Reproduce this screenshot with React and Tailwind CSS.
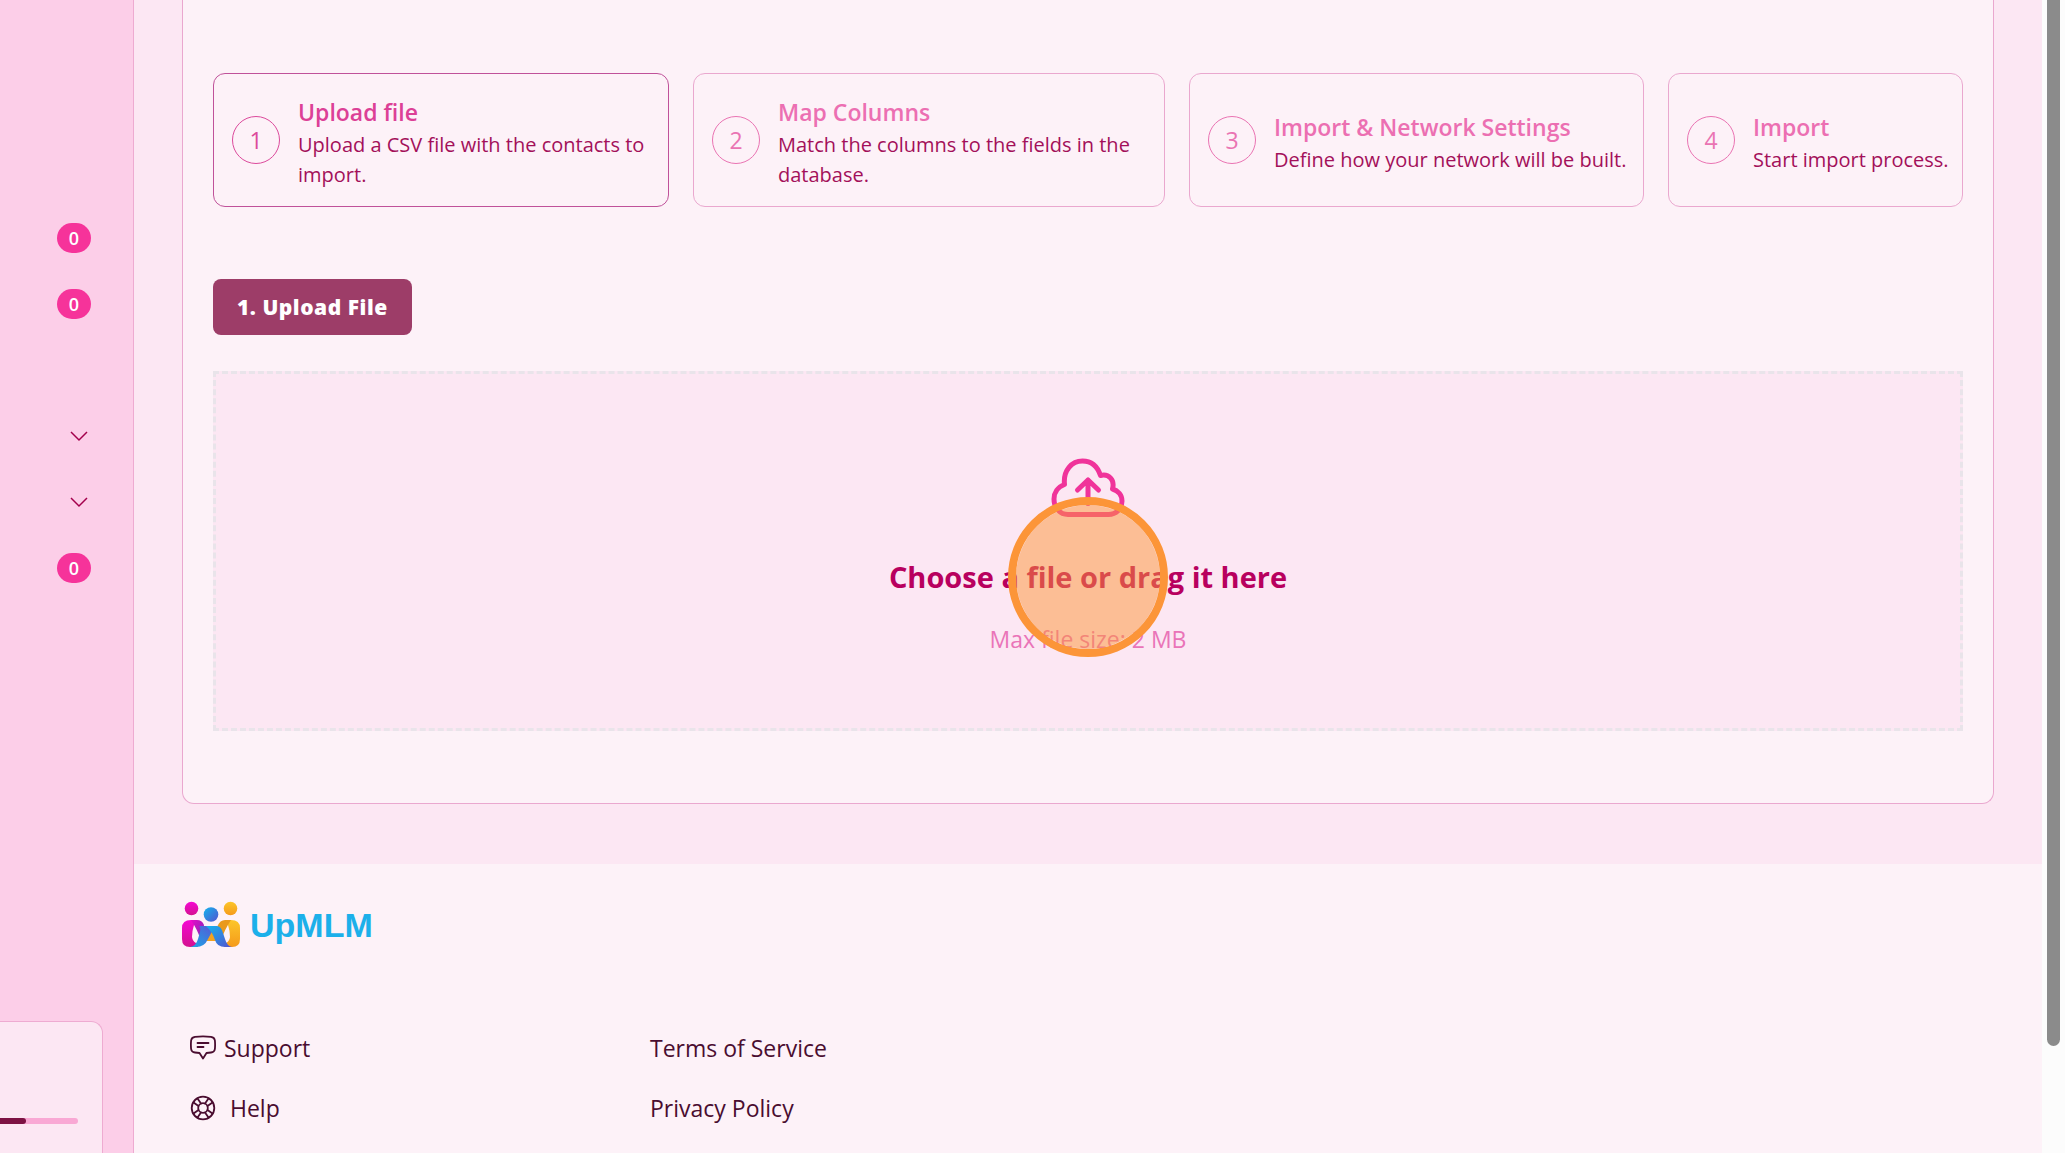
const steps = [
    { title: "Upload file", text: "Upload a CSV file with the contacts to import." },
    { title: "Map Columns", text: "Match the columns to the fields in the database." },
    { title: "Import & Network Settings", text: "Define how your network will be built." },
    { title: "Import", text: "Start import process." },
]

const sidebarRows = ["badge", "badge", "", "menu", "menu", "badge"]

function Sidebar() {
    return <aside className="w-[134px] shrink-0 flex flex-col justify-between bg-[#fccee8] border-r border-[#eeabd1]">
        <ul className="pt-[205px] pr-[42px]">
            {sidebarRows.map((row, i) => (
                <li key={i} className="h-[66px] flex items-center justify-end">
                    {row === "badge" && <span className="bg-pink-500 text-white font-semibold text-lg leading-[30px] rounded-full w-[34px] text-center">0</span>}
                    {row === "menu" && <button type="button" aria-label="Expand" className="text-[#a3004c]">
                        <svg width="24" height="24" viewBox="0 0 24 24" fill="none" stroke="currentColor" strokeWidth="1.5">
                            <path d="M4 8l8 8 8-8" />
                        </svg>
                    </button>}
                </li>
            ))}
        </ul>
        <div className="h-[132px] mr-[30px] border-t border-r border-[#eeabd1] rounded-tr-xl bg-[#fce7f3] pt-24 pr-6">
            <div className="h-[6px] bg-[#f9a8d4] rounded-r-full">
                <div className="h-full w-1/3 bg-[#7d1243] rounded-r-full"></div>
            </div>
        </div>
    </aside>
}

function Step({ number, title, text, active }) {
    return <li className={active
        ? "flex items-center gap-[18px] pl-[18px] pr-2 rounded-xl border border-[#c0529a]"
        : "flex items-center gap-[18px] pl-[18px] pr-2 rounded-xl border border-[#eaa8cf]"}>
        <span className={active
            ? "size-12 shrink-0 rounded-full border border-[#dc4a9c] text-[#dc4a9c] text-[23px] flex items-center justify-center"
            : "size-12 shrink-0 rounded-full border border-[#ea74b3] text-[#ea74b3] text-[23px] flex items-center justify-center"}>{number}</span>
        <div className="pt-1">
            <h3 className={active
                ? "text-[23px] leading-9 font-semibold text-[#dc4096]"
                : "text-[23px] leading-9 font-semibold text-[#ec6fb2]"}>{title}</h3>
            <p className="text-xl leading-[30px] text-[#a3105a]">{text}</p>
        </div>
    </li>
}

function CloudUpload() {
    return <svg width="74" height="60" viewBox="0 0 74 60" fill="none" stroke="#f0339a" strokeWidth="5" strokeLinecap="round" strokeLinejoin="round">
        <path d="M17 56.500H57.500C65 56.500 71 51 71 43C71 37 67 32.500 61.500 31C64 22 58 15.500 49.500 17.500C46 7 39 3 31.500 3C21 3 12 12 13.500 26.500C6.500 29 3 35 3 41C3 50 9 56.500 17 56.500Z" />
        <path d="M37 45.500V22M26.500 32L37 22L47.500 32" />
    </svg>
}

function Logo() {
    return <svg width="58" height="47" viewBox="0 0 58 47">
        <defs>
            <linearGradient id="magenta" x1="0" y1="0" x2="0" y2="1">
                <stop offset="0" stopColor="#f508d4" />
                <stop offset="1" stopColor="#d3128f" />
            </linearGradient>
            <linearGradient id="fold" x1="0" y1="0" x2="1" y2="1">
                <stop offset="0" stopColor="#e60bc8" />
                <stop offset="1" stopColor="#7d2bb5" />
            </linearGradient>
            <linearGradient id="amber" x1="0" y1="0" x2="0" y2="1">
                <stop offset="0" stopColor="#fcc62a" />
                <stop offset="1" stopColor="#f59a1b" />
            </linearGradient>
            <linearGradient id="sky" x1="0" y1="0" x2="1" y2="1">
                <stop offset="0" stopColor="#12b5ee" />
                <stop offset="1" stopColor="#5552cf" />
            </linearGradient>
            <linearGradient id="azure" x1="1" y1="0" x2="0" y2="1">
                <stop offset="0" stopColor="#5a55d4" />
                <stop offset="1" stopColor="#1aa9e8" />
            </linearGradient>
        </defs>
        <circle cx="9.500" cy="7.500" r="6.800" fill="url(#magenta)" />
        <circle cx="48.500" cy="7.500" r="6.800" fill="url(#amber)" />
        <circle cx="29" cy="13.500" r="7.300" fill="url(#sky)" />
        <path d="M23 40H35L33 31H27Z" fill="#f2a321" />
        <path d="M9 19H15L12.500 22Q10 30 10 36Q10.500 40 14 42L16 46H8Q0 46 0 38V27Q0 19 9 19Z" fill="url(#magenta)" />
        <path d="M9 19H15Q20 19 22 24L21 34L18 37Q15.500 29 9 19Z" fill="url(#fold)" />
        <path d="M49 19H43L45.500 22Q48 30 48 36Q47.500 40 44 42L42 46H50Q58 46 58 38V27Q58 19 49 19Z" fill="url(#amber)" />
        <path d="M49 19H43Q38 19 35.500 25L37 34L40 37Q42.500 29 49 19Z" fill="#e99a1d" />
        <path d="M17 25H33L26 38Q22.500 46 14 46H8Q14 45 16 38L18 31Q19 26 17 25Z" fill="url(#azure)" />
        <path d="M24 25H35Q39 25 41 32L43 38Q45 45 50 46H43Q35 46 33 39Q30.500 31 24 25Z" fill="url(#sky)" />
    </svg>
}

function SupportIcon() {
    return <svg width="26" height="26" viewBox="0 0 26 26" fill="none" stroke="currentColor" strokeWidth="1.800" strokeLinecap="round" strokeLinejoin="round">
        <path d="M5 1.800Q13 .8 21 1.800Q24.500 2.200 24.900 5.500Q25.300 10 24.900 14Q24.500 17.200 21 17.500L16.500 18L13 23.500L9.500 18L5 17.500Q1.500 17.200 1.100 14Q.7 10 1.100 5.500Q1.500 2.200 5 1.800Z" />
        <path d="M7.500 8H18.500M7.500 12H13.500" />
    </svg>
}

function HelpIcon() {
    return <svg width="26" height="26" viewBox="0 0 26 26" fill="none" stroke="currentColor" strokeWidth="1.800" strokeLinecap="round">
        <circle cx="13" cy="13" r="11.300" />
        <circle cx="13" cy="13" r="4.800" />
        <path d="M8.500 11L3.500 7.500M11 8.500L7.500 3.500M15 8.500L18.500 3.500M17.500 11L22.500 7.500M17.500 15L22.500 18.500M15 17.500L18.500 22.500M11 17.500L7.500 22.500M8.500 15L3.500 18.500" />
    </svg>
}

function Footer() {
    return <footer className="grow bg-[#fdf2f8] px-12 pt-[34px] text-[#4a0d30]">
        <a href="#" className="inline-flex items-center gap-2.5">
            <Logo />
            <span className="pt-0.5 font-['Liberation_Sans',sans-serif] font-bold text-[34px] leading-[50px] text-[#1cb0ea]">UpMLM</span>
        </a>
        <div className="grid grid-cols-[460px_1fr] mt-16 pl-2 text-[23px] leading-[60px]">
            <a href="#" className="flex items-center gap-2"><SupportIcon />Support</a>
            <a href="#">Terms of Service</a>
            <a href="#" className="flex items-center gap-3.5"><HelpIcon />Help</a>
            <a href="#">Privacy Policy</a>
        </div>
    </footer>
}

export default function App() {
    return <div className="h-screen flex overflow-hidden bg-[#fce7f3] font-['Open_Sans','Noto_Sans',sans-serif]">
        <Sidebar />
        <div className="grow min-w-0 flex flex-col">
            <main className="px-12 pb-[60px]">
                <section className="bg-[#fdf2f8] border border-t-0 border-[#eaa8cf] rounded-b-xl px-[30px] pt-[73px] pb-[72px]">
                    <ol className="grid grid-cols-[456fr_472fr_455fr_295fr] gap-6 min-h-[134px]">
                        {steps.map((step, i) => (
                            <Step key={step.title} number={i + 1} title={step.title} text={step.text} active={i === 0} />
                        ))}
                    </ol>
                    <button type="button" className="mt-[72px] px-6 pt-0.5 h-14 rounded-lg bg-[#9d3d68] text-white text-[21px] font-extrabold tracking-wide">1. Upload File</button>
                    <label className="mt-9 pt-[84px] pb-[71px] flex flex-col items-center border-3 border-dashed border-[#e9e4ea] bg-[#fce7f3] cursor-pointer">
                        <input type="file" accept=".csv" className="sr-only" />
                        <CloudUpload />
                        <span className="relative mt-[39px] text-[29px] leading-10 font-bold text-[#b8005e]">
                            Choose a file or drag it here
                            <span className="absolute left-1/2 top-1/2 -translate-1/2 size-40 rounded-full border-8 border-[#fc9538] bg-[#fc9538]/50 bg-clip-padding"></span>
                        </span>
                        <span className="mt-6 text-[23px] leading-9 text-[#ea74b8]">Max file size: 2 MB</span>
                    </label>
                </section>
            </main>
            <Footer />
        </div>
        <div className="w-[23px] shrink-0 bg-[#fcfcfc] px-[5px]">
            <div className="h-[1046px] rounded-b-full bg-[#8b8b8b]"></div>
        </div>
    </div>
}
